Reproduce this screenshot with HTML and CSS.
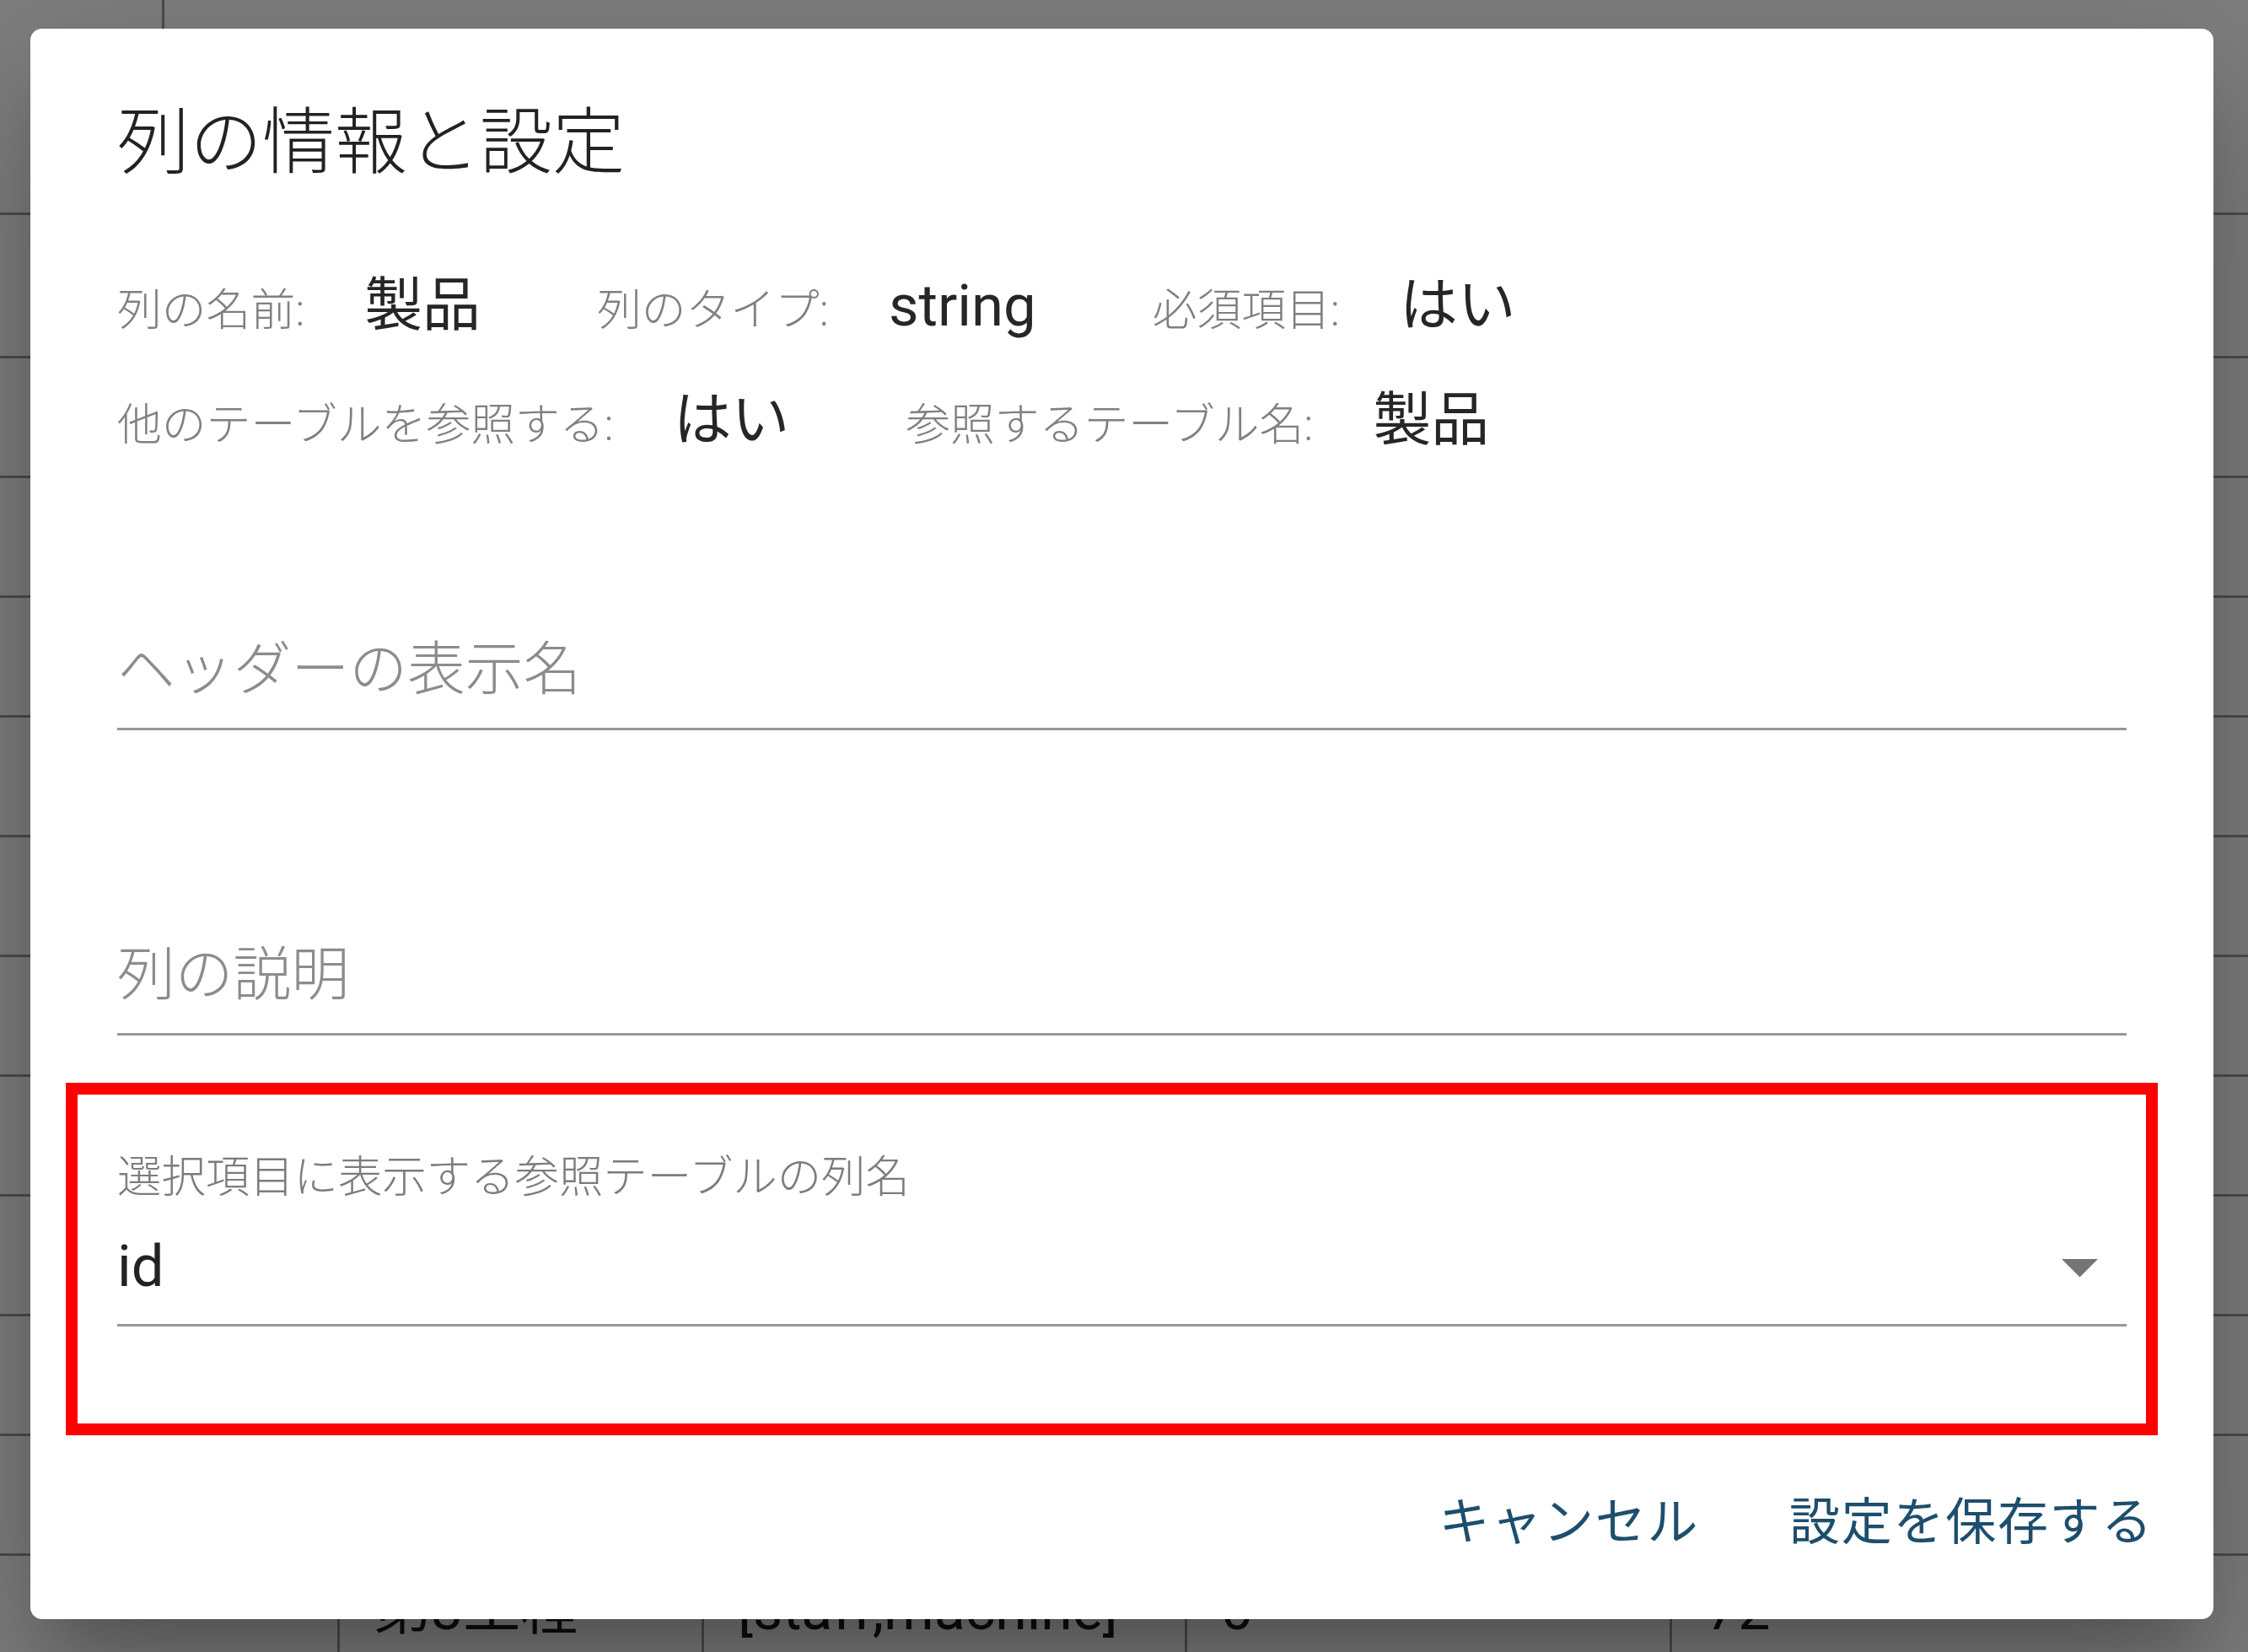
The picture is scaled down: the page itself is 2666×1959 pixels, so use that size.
FILE: index.html
```html
<!DOCTYPE html>
<html lang="ja">
<head>
<meta charset="utf-8">
<title>列の情報と設定</title>
<link rel="stylesheet" href="styles.css">
</head>
<body>
<div class="page">
  <div class="toolbar"><div class="tool-cell"></div></div>
  <div class="row row-head"><div class="cell"></div><div class="cell"></div><div class="cell"></div><div class="cell"></div><div class="cell c-last"></div></div>
  <div class="row row-2"><div class="cell"></div><div class="cell"></div><div class="cell"></div><div class="cell"></div><div class="cell c-last"></div></div>
  <div class="row"><div class="cell"></div><div class="cell"></div><div class="cell"></div><div class="cell"></div><div class="cell c-last"></div></div>
  <div class="row"><div class="cell"></div><div class="cell"></div><div class="cell"></div><div class="cell"></div><div class="cell c-last"></div></div>
  <div class="row"><div class="cell"></div><div class="cell"></div><div class="cell"></div><div class="cell"></div><div class="cell c-last"></div></div>
  <div class="row"><div class="cell"></div><div class="cell"></div><div class="cell"></div><div class="cell"></div><div class="cell c-last"></div></div>
  <div class="row"><div class="cell"></div><div class="cell"></div><div class="cell"></div><div class="cell"></div><div class="cell c-last"></div></div>
  <div class="row"><div class="cell"></div><div class="cell"></div><div class="cell"></div><div class="cell"></div><div class="cell c-last"></div></div>
  <div class="row"><div class="cell"></div><div class="cell"></div><div class="cell"></div><div class="cell"></div><div class="cell c-last"></div></div>
  <div class="row"><div class="cell"></div><div class="cell"></div><div class="cell"></div><div class="cell"></div><div class="cell c-last"></div></div>
  <div class="row"><div class="cell"></div><div class="cell"></div><div class="cell"></div><div class="cell"></div><div class="cell c-last"></div></div>
  <div class="row"><div class="cell"></div><div class="cell"></div><div class="cell"></div><div class="cell"></div><div class="cell c-last"></div></div>
  <div class="row row-text"><div class="cell"></div><div class="cell">第3工程</div><div class="cell">[staff,machine]</div><div class="cell">0</div><div class="cell c-last">72</div></div>
</div>

<div class="backdrop"></div>

<div class="dialog">
  <h2 class="title">列の情報と設定</h2>

  <div class="info">
    <div class="info-row">
      <span class="item"><span class="lbl">列の名前:</span><span class="val">製品</span></span>
      <span class="item"><span class="lbl">列のタイプ:</span><span class="val">string</span></span>
      <span class="item"><span class="lbl">必須項目:</span><span class="val">はい</span></span>
    </div>
    <div class="info-row">
      <span class="item"><span class="lbl">他のテーブルを参照する:</span><span class="val">はい</span></span>
      <span class="item"><span class="lbl">参照するテーブル名:</span><span class="val">製品</span></span>
    </div>
  </div>

  <div class="field field-1">
    <div class="input placeholder">ヘッダーの表示名</div>
  </div>

  <div class="field field-2">
    <div class="input placeholder">列の説明</div>
  </div>

  <div class="field field-select">
    <div class="flabel">選択項目に表示する参照テーブルの列名</div>
    <div class="input value">id
      <svg class="arrow" viewBox="0 0 24 24" width="103" height="103"><path d="M7 10l5 5 5-5z"/></svg>
    </div>
  </div>

  <div class="actions">
    <button class="btn">キャンセル</button>
    <button class="btn">設定を保存する</button>
  </div>

  <div class="highlight"></div>
</div>
</body>
</html>
```

FILE: styles.css
```css
html, body {
  margin: 0;
  padding: 0;
}

body {
  width: 2666px;
  height: 1959px;
  overflow: hidden;
  position: relative;
  background: #ffffff;
  font-family: Roboto, "Noto Sans CJK JP", sans-serif;
}

/* underlying page (table) */
.page {
  display: flex;
  flex-direction: column;
}

.toolbar {
  height: 57px;
  display: flex;
}

.tool-cell {
  width: 192px;
  border-right: 3px solid #9a9a9a;
}

.row {
  display: grid;
  grid-template-columns: 403px 432px 573px 575px 1fr;
  height: 142px;
  border-bottom: 3px solid #9a9a9a;
  box-sizing: border-box;
}

.row-head {
  height: 198px;
}

.row-2 {
  height: 170px;
}

.cell {
  border-right: 3px solid #9a9a9a;
}

.c-last {
  border-right: none;
}

.row-text .cell {
  font-size: 68px;
  line-height: 128px;
  color: #1a1a1a;
  padding-left: 40px;
  white-space: nowrap;
  overflow: hidden;
}

.backdrop {
  position: fixed;
  inset: 0;
  background: rgba(0, 0, 0, 0.5);
}

/* dialog */
.dialog {
  position: absolute;
  left: 36px;
  top: 34px;
  width: 2589px;
  height: 1886px;
  box-sizing: border-box;
  padding: 0 103px;
  background: #ffffff;
  border-radius: 14px;
  display: flex;
  flex-direction: column;
  box-shadow:
    0 47px 64px -30px rgba(0, 0, 0, 0.2),
    0 103px 163px 13px rgba(0, 0, 0, 0.14),
    0 39px 198px 34px rgba(0, 0, 0, 0.12);
}

.title {
  margin: 0;
  padding-top: 67px;
  font-size: 86px;
  line-height: 137px;
  font-weight: 300;
  color: #222222;
}

.info {
  margin-top: 75px;
  display: flex;
  flex-direction: column;
  gap: 36px;
}

.info-row {
  display: flex;
  align-items: baseline;
  height: 100px;
  line-height: 100px;
  white-space: nowrap;
}

.item {
  display: inline-flex;
  align-items: baseline;
  margin-right: 138px;
}

.lbl {
  font-size: 52.8px;
  font-weight: 300;
  color: #808080;
  margin-right: 71px;
}

.val {
  font-size: 68.8px;
  font-weight: 400;
  color: #262626;
}

.field {
  display: flex;
  flex-direction: column;
}

.field-1 {
  margin-top: 192px;
}

.field-2 {
  margin-top: 237px;
}

.field-select {
  margin-top: 138px;
}

.input {
  position: relative;
  height: 100px;
  line-height: 100px;
  font-size: 68.8px;
  padding-top: 4px;
  padding-bottom: 18px;
  border-bottom: 3px solid #979797;
}

.placeholder {
  color: #8c8c8c;
  font-weight: 300;
}

.value {
  color: #222222;
  margin-top: 22px;
}

.flabel {
  font-size: 52.4px;
  line-height: 60px;
  font-weight: 300;
  color: #7c7c7c;
}

.arrow {
  position: absolute;
  right: 4px;
  top: 2px;
  fill: #757575;
}

.actions {
  margin-top: 183px;
  margin-right: -32px;
  display: flex;
  justify-content: flex-end;
  gap: 107px;
}

.btn {
  background: none;
  border: none;
  padding: 0;
  margin: 0;
  font-family: Roboto, "Noto Sans CJK JP", sans-serif;
  font-size: 60px;
  font-weight: 400;
  letter-spacing: 1.7px;
  line-height: 100px;
  color: #1d4e6e;
}

/* annotation overlay */
.highlight {
  position: absolute;
  left: 42px;
  top: 1250px;
  width: 2481px;
  height: 418px;
  box-sizing: border-box;
  border: 14px solid #ff0000;
}
```
